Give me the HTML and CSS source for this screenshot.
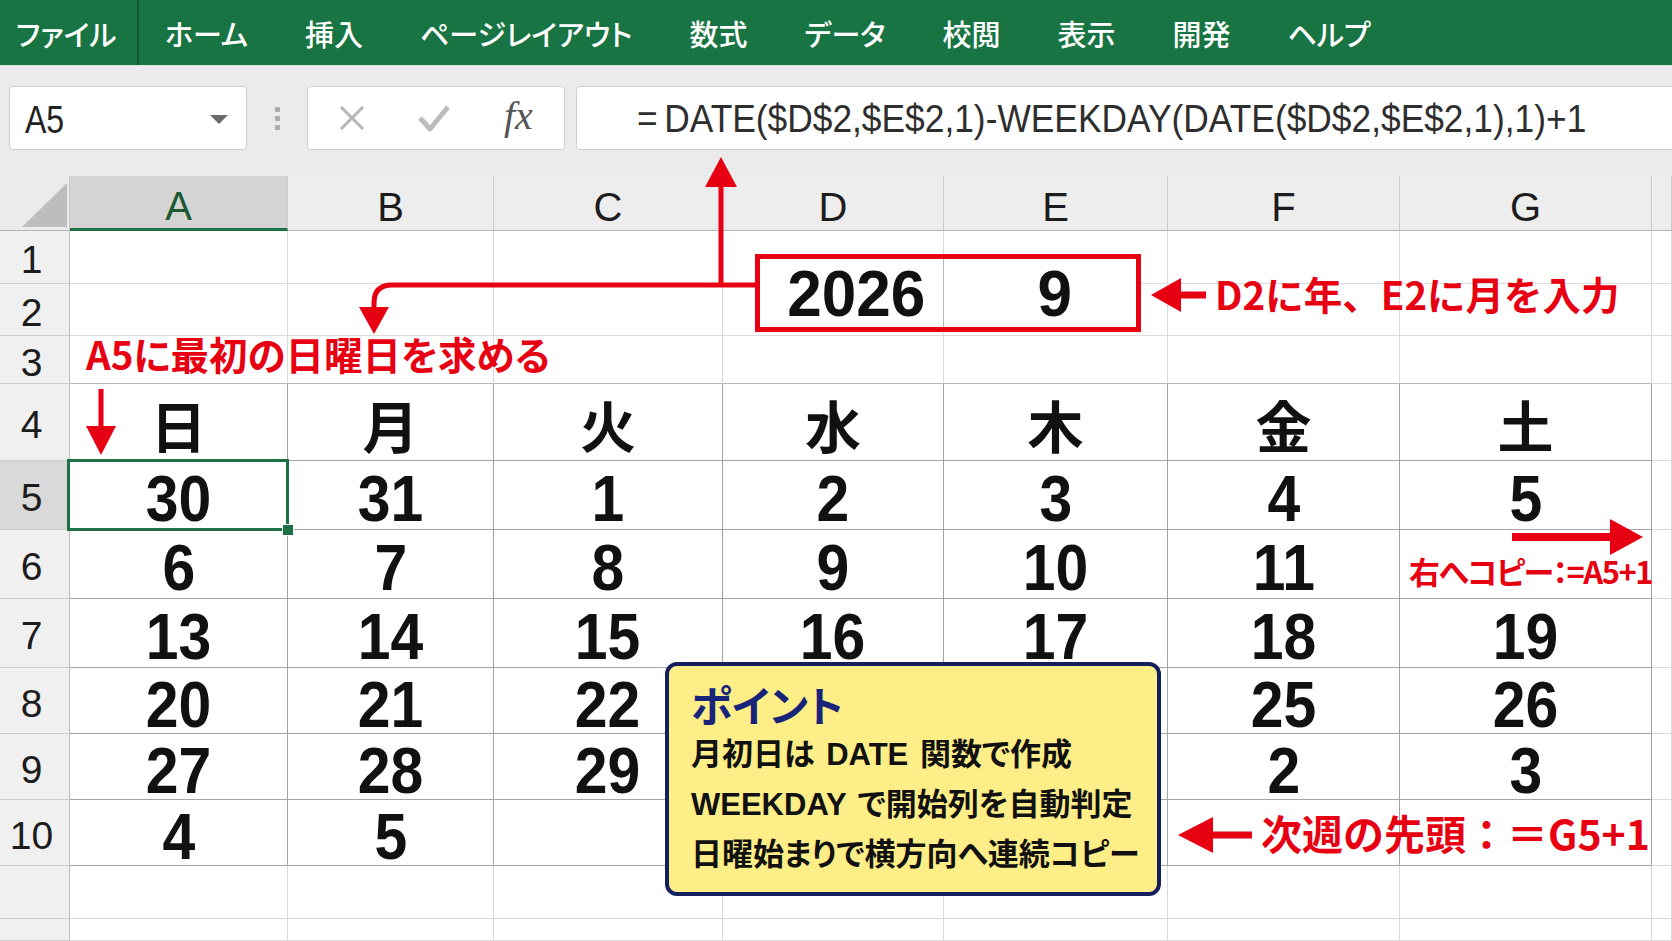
FILE: index.html
```html
<!DOCTYPE html>
<html lang="ja">
<head>
<meta charset="utf-8">
<title>Excel カレンダー</title>
<link rel="stylesheet" href="styles.css">
</head>
<body>
<div class="ribbon">
  <div class="tab-file">ファイル</div>
  <div class="tabs">
    <span>ホーム</span><span>挿入</span><span>ページレイアウト</span><span>数式</span><span>データ</span><span>校閲</span><span>表示</span><span>開発</span><span>ヘルプ</span>
  </div>
</div>
<div class="fbar">
  <div class="namebox"><span class="nb-text">A5</span><span class="nb-caret"></span></div>
  <div class="dots"><i></i><i></i><i></i></div>
  <div class="fxbox">
    <svg class="ico-x" width="30" height="30" viewBox="0 0 30 30"><path d="M4 4 L26 26 M26 4 L4 26" stroke="#b4b4b4" stroke-width="3" fill="none"/></svg>
    <svg class="ico-ok" width="34" height="30" viewBox="0 0 34 30"><path d="M3 15 L13 26 L31 4" stroke="#bcbcbc" stroke-width="5" fill="none" stroke-linejoin="round"/></svg>
    <span class="fx">fx</span>
  </div>
  <div class="formula"><span class="ftext"><span class="eq">=</span>DATE($D$2,$E$2,1)-WEEKDAY(DATE($D$2,$E$2,1),1)+1</span></div>
</div>

<div class="sheet">
  <!-- header row -->
  <div class="corner"><svg width="70" height="55" viewBox="0 0 70 55"><polygon points="22,51 67,51 67,7" fill="#bdbdbd"/></svg></div>
  <div class="ch sel">A</div><div class="ch">B</div><div class="ch">C</div><div class="ch">D</div><div class="ch">E</div><div class="ch">F</div><div class="ch">G</div><div class="ch"></div>
  <!-- row 1 -->
  <div class="rh">1</div><div class="c"></div><div class="c"></div><div class="c"></div><div class="c"></div><div class="c"></div><div class="c"></div><div class="c"></div><div class="c"></div>
  <!-- row 2 -->
  <div class="rh">2</div><div class="c"></div><div class="c"></div><div class="c"></div><div class="c"></div><div class="c"></div><div class="c"></div><div class="c"></div><div class="c"></div>
  <!-- row 3 -->
  <div class="rh">3</div><div class="c ct"></div><div class="c ct"></div><div class="c ct"></div><div class="c ct"></div><div class="c ct"></div><div class="c ct"></div><div class="c ct"></div><div class="c"></div>
  <!-- row 4 -->
  <div class="rh">4</div><div class="c cal wk">日</div><div class="c cal wk">月</div><div class="c cal wk">火</div><div class="c cal wk">水</div><div class="c cal wk">木</div><div class="c cal wk">金</div><div class="c cal wk">土</div><div class="c"></div>
  <!-- row 5 -->
  <div class="rh rsel">5</div><div class="c cal a5"><span class="n">30</span></div><div class="c cal"><span class="n">31</span></div><div class="c cal"><span class="n">1</span></div><div class="c cal"><span class="n">2</span></div><div class="c cal"><span class="n">3</span></div><div class="c cal"><span class="n">4</span></div><div class="c cal"><span class="n">5</span></div><div class="c"></div>
  <!-- row 6 -->
  <div class="rh">6</div><div class="c cal"><span class="n">6</span></div><div class="c cal"><span class="n">7</span></div><div class="c cal"><span class="n">8</span></div><div class="c cal"><span class="n">9</span></div><div class="c cal"><span class="n">10</span></div><div class="c cal"><span class="n">11</span></div><div class="c cal"></div><div class="c"></div>
  <!-- row 7 -->
  <div class="rh">7</div><div class="c cal"><span class="n">13</span></div><div class="c cal"><span class="n">14</span></div><div class="c cal"><span class="n">15</span></div><div class="c cal"><span class="n">16</span></div><div class="c cal"><span class="n">17</span></div><div class="c cal"><span class="n">18</span></div><div class="c cal"><span class="n">19</span></div><div class="c"></div>
  <!-- row 8 -->
  <div class="rh">8</div><div class="c cal"><span class="n">20</span></div><div class="c cal"><span class="n">21</span></div><div class="c cal"><span class="n">22</span></div><div class="c cal"></div><div class="c cal"></div><div class="c cal"><span class="n">25</span></div><div class="c cal"><span class="n">26</span></div><div class="c"></div>
  <!-- row 9 -->
  <div class="rh">9</div><div class="c cal"><span class="n">27</span></div><div class="c cal"><span class="n">28</span></div><div class="c cal"><span class="n">29</span></div><div class="c cal"></div><div class="c cal"></div><div class="c cal"><span class="n">2</span></div><div class="c cal"><span class="n">3</span></div><div class="c"></div>
  <!-- row 10 -->
  <div class="rh">10</div><div class="c cal"><span class="n">4</span></div><div class="c cal"><span class="n">5</span></div><div class="c cal"></div><div class="c cal"></div><div class="c cal"></div><div class="c cal"></div><div class="c cal"></div><div class="c"></div>
  <!-- row 11 -->
  <div class="rh"></div><div class="c"></div><div class="c"></div><div class="c"></div><div class="c"></div><div class="c"></div><div class="c"></div><div class="c"></div><div class="c"></div>
  <!-- row 12 -->
  <div class="rh"></div><div class="c"></div><div class="c"></div><div class="c"></div><div class="c"></div><div class="c"></div><div class="c"></div><div class="c"></div><div class="c"></div>
</div>

<svg class="ann" width="1672" height="941" viewBox="0 0 1672 941">
  <g fill="#e60012" stroke="#e60012">
    <path d="M757 285 H392 Q374 285 374 303 V310" stroke-width="5" fill="none"/>
    <polygon points="359,307 389,307 374,334" stroke="none"/>
    <line x1="721" y1="287" x2="721" y2="182" stroke-width="5"/>
    <polygon points="705,187 737,187 721,157" stroke="none"/>
    <line x1="101" y1="389" x2="101" y2="430" stroke-width="5"/>
    <polygon points="86,426 116,426 101,455" stroke="none"/>
    <line x1="1175" y1="295" x2="1206" y2="295" stroke-width="7"/>
    <polygon points="1151,295 1181,278 1181,312" stroke="none"/>
    <line x1="1512" y1="537" x2="1614" y2="537" stroke-width="8"/>
    <polygon points="1643,537 1610,519 1610,555" stroke="none"/>
    <line x1="1205" y1="835" x2="1252" y2="835" stroke-width="7"/>
    <polygon points="1178,835 1213,817 1213,853" stroke="none"/>
  </g>
</svg>

<div class="ymbox">
  <div class="ym-d"><span class="n yn">2026</span></div>
  <div class="ym-e"><span class="n yn">9</span></div>
</div>

<div class="lbl lbl-a5">A5に最初の日曜日を求める</div>
<div class="lbl lbl-d2">D2に年、E2に月を入力</div>
<div class="lbl lbl-right">右へコピー：=A5+1</div>
<div class="lbl lbl-next">次週の先頭：＝G5+1</div>

<div class="point">
  <div class="pt-title">ポイント</div>
  <div class="pt-line">月初日は DATE 関数で作成</div>
  <div class="pt-line">WEEKDAY で開始列を自動判定</div>
  <div class="pt-line">日曜始まりで横方向へ連続コピー</div>
</div>
</body>
</html>
```

FILE: styles.css
```css
* { box-sizing: border-box; }

body {
  margin: 0;
  width: 1672px;
  height: 941px;
  overflow: hidden;
  position: relative;
  background: #ffffff;
  font-family: "Liberation Sans", "Noto Sans CJK JP", sans-serif;
  color: #1a1a1a;
}

/* ribbon */
.ribbon {
  height: 66px;
  background: #187442;
  display: flex;
  align-items: stretch;
  color: #ffffff;
  font-family: "Noto Sans CJK JP", sans-serif;
  font-size: 29px;
  font-weight: 500;
  font-feature-settings: "palt";
  border-bottom: 1px solid #d8e6dc;
}
.tab-file {
  width: 139px;
  display: flex;
  align-items: center;
  padding-left: 16px;
  border-right: 2px solid #0f5c31;
}
.tabs {
  display: flex;
  align-items: center;
  gap: 57px;
  padding-left: 26px;
}

/* formula bar */
.fbar {
  height: 110px;
  background: #ebebeb;
  display: flex;
  align-items: flex-start;
  padding-top: 20px;
  padding-left: 9px;
}
.namebox {
  width: 238px;
  height: 64px;
  background: #ffffff;
  border: 1px solid #d0d0d0;
  border-radius: 4px;
  display: flex;
  align-items: center;
  padding-left: 15px;
  padding-top: 3px;
}
.nb-text {
  display: inline-block;
  font-size: 39px;
  color: #222;
  transform: scaleX(0.82);
  transform-origin: left center;
}
.nb-caret {
  margin-left: auto;
  margin-right: 18px;
  width: 0;
  height: 0;
  border-left: 9px solid transparent;
  border-right: 9px solid transparent;
  border-top: 9px solid #6a6a6a;
}
.dots {
  width: 60px;
  height: 64px;
  display: flex;
  flex-direction: column;
  align-items: center;
  justify-content: center;
  gap: 4px;
}
.dots i {
  display: block;
  width: 5px;
  height: 5px;
  background: #ababab;
  border-radius: 1px;
}
.fxbox {
  width: 258px;
  height: 64px;
  background: #ffffff;
  border: 1px solid #d0d0d0;
  border-radius: 4px;
  display: flex;
  align-items: center;
  padding-left: 29px;
}
.ico-x { margin-right: 50px; }
.ico-ok { margin-right: 53px; }
.fx {
  font-family: "Liberation Serif", serif;
  font-style: italic;
  font-size: 40px;
  color: #555;
  line-height: 1;
  margin-top: -4px;
}
.formula {
  flex: 1;
  height: 64px;
  margin-left: 11px;
  margin-right: -12px;
  background: #ffffff;
  border: 1px solid #d0d0d0;
  border-radius: 4px;
  display: flex;
  align-items: center;
  padding-left: 60px;
  padding-top: 3px;
  overflow: hidden;
  white-space: nowrap;
}
.ftext {
  display: inline-block;
  font-size: 38px;
  color: #2e2e2e;
  transform: scaleX(0.93);
  transform-origin: left center;
}
.eq { margin-right: 7px; }

/* sheet */
.sheet {
  display: grid;
  grid-template-columns: 70px 218px 206px 229px 221px 224px 232px 252px 20px;
  grid-template-rows: 55px 53px 52px 48px 77px 69px 69px 69px 66px 66px 66px 53px 22px;
}
.corner {
  background: #ebebeb;
  border-right: 1px solid #c4c4c4;
  border-bottom: 1px solid #b4b4b4;
}
.corner svg { display: block; }
.ch {
  background: #ededed;
  border-right: 1px solid #cacaca;
  border-bottom: 1px solid #b4b4b4;
  display: flex;
  align-items: center;
  justify-content: center;
  padding-top: 8px;
  font-size: 40px;
  color: #1c1c1c;
}
.ch.sel {
  background: #d4d4d4;
  border-bottom: 3px solid #1e7145;
  color: #1b5a31;
}
.rh {
  background: #f0f0f0;
  border-right: 1px solid #bdbdbd;
  border-bottom: 1px solid #cdcdcd;
  display: flex;
  align-items: center;
  justify-content: center;
  padding-right: 6px;
  padding-top: 6px;
  font-size: 39px;
  color: #1c1c1c;
}
.rh.rsel { background: #d9d9d9; }
.c {
  border-right: 1px solid #dadada;
  border-bottom: 1px solid #dadada;
  display: flex;
  align-items: center;
  justify-content: center;
}
.c.ct { border-bottom-color: #b8b8b8; }
.c.cal {
  border-right-color: #a4a4a4;
  border-bottom-color: #a4a4a4;
}
.wk {
  font-family: "Noto Sans CJK JP", sans-serif;
  font-weight: 700;
  font-size: 56px;
  line-height: 1;
  color: #111;
  padding-top: 4px;
}
.n {
  display: inline-block;
  font-family: "Liberation Sans", sans-serif;
  font-weight: 700;
  font-size: 64px;
  line-height: 1;
  color: #111;
  transform: scaleX(0.92);
  margin-top: 8px;
}
.n.yn {
  transform: scaleX(0.97);
  margin-top: 0;
}
.a5 { position: relative; }
.a5::after {
  content: "";
  position: absolute;
  left: -3px;
  top: -2px;
  right: -2px;
  bottom: -2px;
  border: 3px solid #1e7145;
}
.a5::before {
  content: "";
  position: absolute;
  right: -7px;
  bottom: -7px;
  width: 10px;
  height: 10px;
  background: #1e7145;
  border: 1px solid #ffffff;
  z-index: 2;
}

/* annotations */
.ann {
  position: absolute;
  left: 0;
  top: 0;
  pointer-events: none;
}
.ymbox {
  position: absolute;
  left: 755px;
  top: 254px;
  width: 386px;
  height: 78px;
  border: 5px solid #e60012;
  background: #ffffff;
  display: flex;
}
.ym-d {
  width: 184px;
  border-right: 1px solid #b5b5b5;
  display: flex;
  align-items: center;
  justify-content: center;
  padding-left: 10px;
  padding-top: 2px;
}
.ym-e {
  flex: 1;
  display: flex;
  align-items: center;
  justify-content: center;
  padding-left: 30px;
  padding-top: 2px;
}
.lbl {
  position: absolute;
  font-family: "Noto Sans CJK JP", sans-serif;
  font-weight: 700;
  color: #e60012;
  line-height: 1;
  white-space: nowrap;
}
.lbl-a5 { left: 86px; top: 334px; font-size: 38.5px; font-feature-settings: "palt"; }
.lbl-d2 { left: 1215px; top: 274px; font-size: 38.5px; }
.lbl-right { left: 1409px; top: 555px; font-size: 31px; letter-spacing: -1.5px; font-feature-settings: "palt"; }
.lbl-next { left: 1261px; top: 812px; font-size: 41px; }

.point {
  position: absolute;
  left: 665px;
  top: 662px;
  width: 496px;
  height: 234px;
  background: #fdee87;
  border: 4px solid #14205e;
  border-radius: 12px;
  padding: 17px 0 0 22px;
  font-family: "Noto Sans CJK JP", sans-serif;
  font-weight: 700;
}
.pt-title {
  font-size: 42px;
  line-height: 1;
  color: #18237a;
  font-feature-settings: "palt";
  margin-bottom: 5px;
}
.pt-line {
  font-family: "Liberation Sans", "Noto Sans CJK JP", sans-serif;
  font-size: 31px;
  line-height: 50px;
  color: #111;
  white-space: nowrap;
  word-spacing: 3px;
  font-feature-settings: "palt";
}
```
